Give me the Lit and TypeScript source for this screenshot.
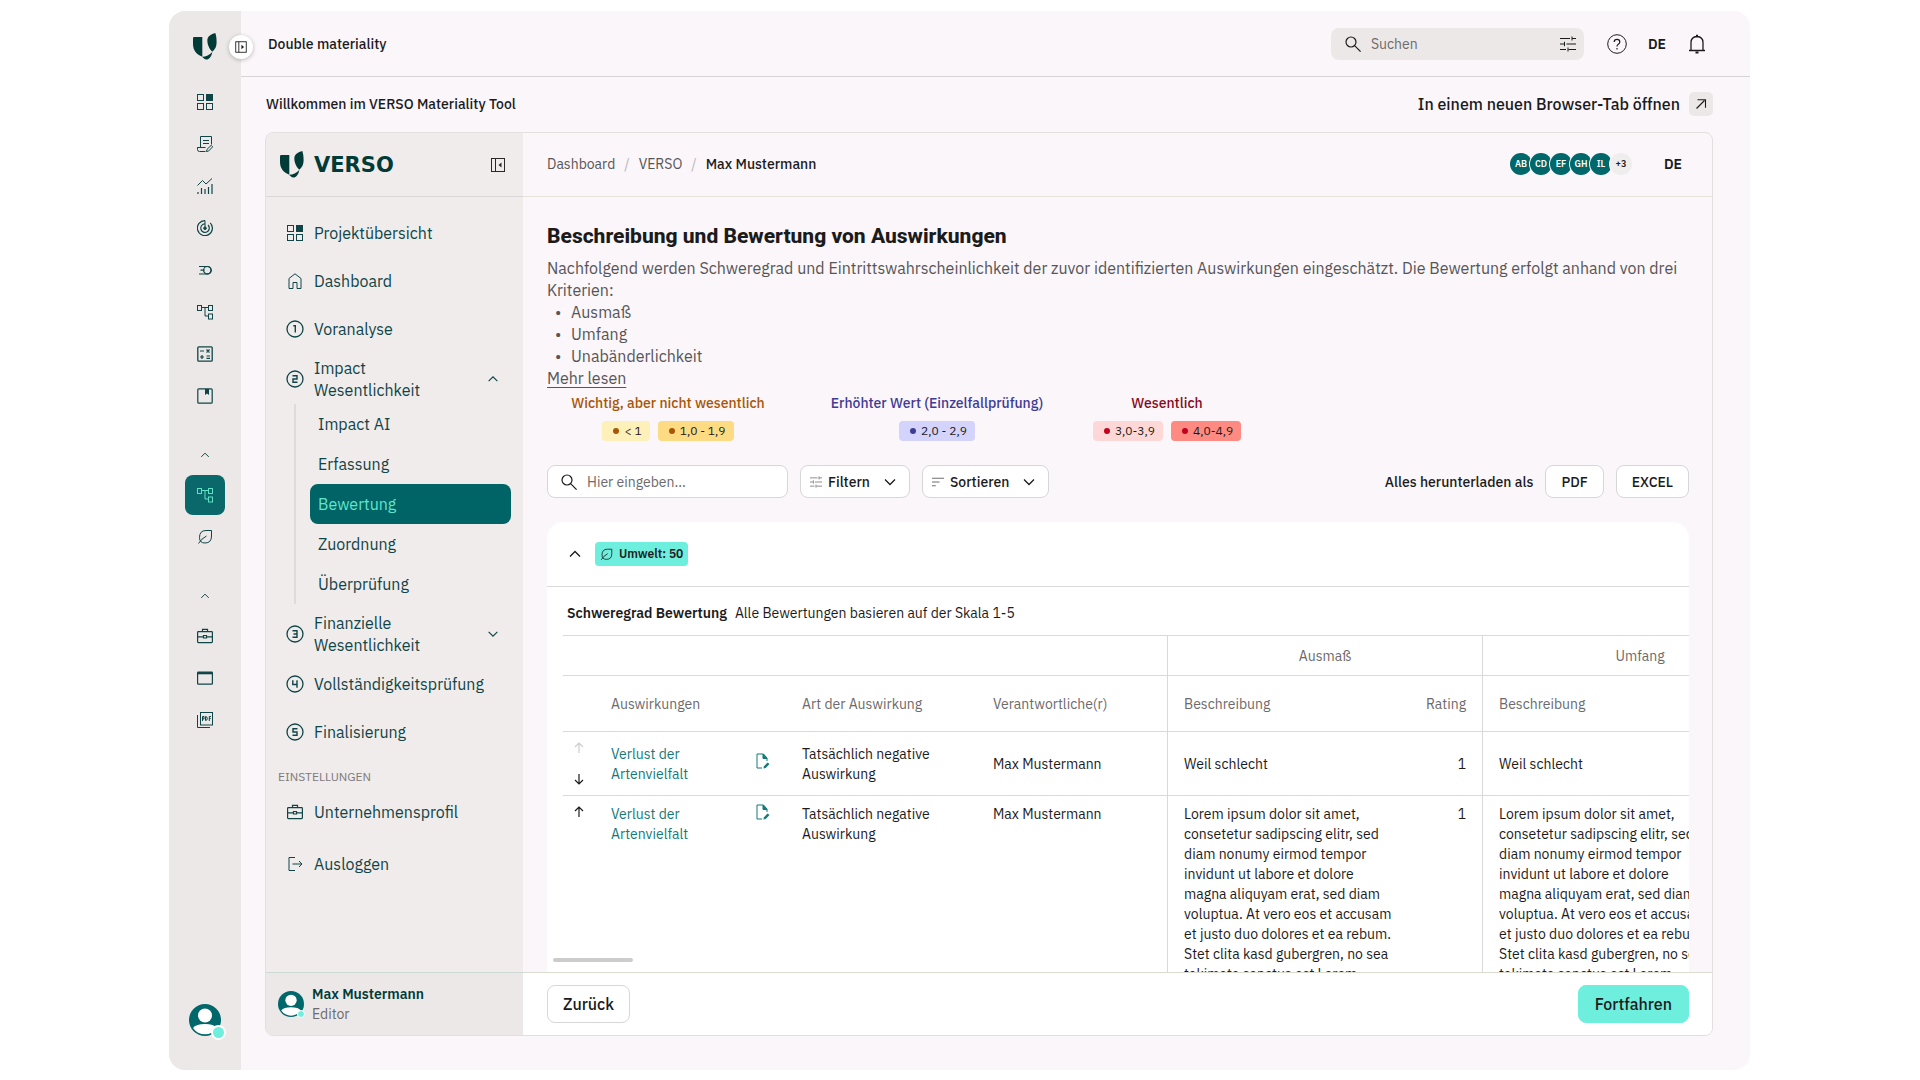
import { LitElement, html, css, svg, nothing, TemplateResult, SVGTemplateResult } from "lit";
import { customElement } from "lit/decorators.js";
import { classMap } from "lit/directives/class-map.js";

const icon = (body: SVGTemplateResult, size = 16, box = 16): TemplateResult => html`
  <svg class="icon" width=${size} height=${size} viewBox="0 0 ${box} ${box}" fill="none" stroke="currentColor" stroke-width="1" aria-hidden="true">${body}</svg>
`;

const glyph = {
  grid: svg`<rect x=".5" y=".5" width="6" height="6"/><rect x="9" y="0" width="7" height="7" fill="currentColor" stroke="none"/><rect x=".5" y="9.5" width="6" height="6"/><rect x="9.5" y="9.5" width="6" height="6"/>`,
  report: svg`<path d="M3.5 11V.5h11v8M6 4.500h6M6 7.500h6M3.500 11.500H.5v2q0 2 2 2h6M.5 11.500h8"/><path d="M9.500 15.500l.4-2L14.200 9.300l1.500 1.500-4.200 4.300z"/>`,
  chart: svg`<path d="M.5 7.500l5-5 3.500 3.500L15 .5"/><path d="M1 14v2M4.500 10v6M8 11v5M11.500 9v7M15 6v10" stroke-width="1.200"/>`,
  target: svg`<path d="M8 .6V7"/><path d="M8 .6A7.500 7.500 0 1 0 13.200 2.800" stroke-width="1.200"/><path d="M8 3.800A4.300 4.300 0 1 0 11 5" stroke-width="1.200"/><circle cx="8" cy="8.200" r="1.300" fill="currentColor"/>`,
  link: svg`<path d="M2 4.500h8.500a3.700 3.700 0 1 1 0 7.500H2M3.500 8.200h4" stroke-width="1.200"/><circle cx="10.300" cy="8.200" r="3.700" stroke-width="1.200"/>`,
  tree: svg`<rect x=".5" y="1.500" width="4" height="5"/><rect x="11.500" y="1.500" width="4" height="5"/><rect x="11.500" y="10" width="4" height="5"/><path d="M4.500 3.500h7M8 3.500v8.500h3.500"/>`,
  calc: svg`<rect x=".8" y=".8" width="14.400" height="14.400" rx="1" stroke-width="1.300"/><path d="M3 5h4M9.500 3.500l3 3M12.500 3.500l-3 3M3 11h4M5 9v4M9.500 10h3.500M9.500 12.300h3.500" stroke-width="1.200"/>`,
  book: svg`<rect x=".8" y=".8" width="14.400" height="14.400" rx="1" stroke-width="1.200"/><path d="M8 1h4v6l-2-1.500L8 7z" fill="currentColor" stroke="none"/>`,
  leaf: svg`<path d="M14.500 1.500v5.500q0 7-6.500 7-5.500 0-5.500-5.500 0-7 6.500-7zM1.500 14.500q3-5 8-7.500"/>`,
  briefcase: svg`<rect x=".6" y="3.600" width="14.800" height="11" rx=".8" stroke-width="1.200"/><path d="M5.500 3.500V1.300h5v2.200M.6 8.800h5.900M9.500 8.800h5.900M6.500 7.500h3v2.500h-3z" stroke-width="1.200"/>`,
  window: svg`<rect x=".6" y="2.200" width="14.800" height="12" rx=".8" stroke-width="1.200"/><path d="M.6 3.200h14.800" stroke-width="2.200"/>`,
  home: svg`<path d="M2 15.500V5.500L8 .8l6 4.700v10h-4v-6H6v6z"/>`,
  logout: svg`<path d="M8 1.500H2v13h6M5.500 8H15M12 5l3 3-3 3"/>`,
  up: svg`<path d="M3 10.500l5-5 5 5" stroke-width="1.300"/>`,
  down: svg`<path d="M3 5.500l5 5 5-5" stroke-width="1.300"/>`,
  search: svg`<circle cx="6" cy="6" r="5" stroke-width="1.200"/><path d="M9.600 9.600l6 6" stroke-width="1.200"/>`,
  tune: svg`<path d="M0 2.500h10M12 2.500h4M12 .5v4M0 8h4M6.500 8H16M4.500 5.800v4.400M0 13.500h6M8.500 13.500H16M8 11.500v4"/>`,
  help: svg`<circle cx="10" cy="10" r="9.300"/><path d="M7.200 8q0-2.700 2.800-2.700T12.800 8q0 1.400-1.500 2.300-1.300.8-1.300 2.200M10 14v1.400" stroke-width="1.200"/>`,
  bell: svg`<path d="M2 16.500h16M4 16.500V8.500q0-5.500 6-6 6 .5 6 6v8" stroke-width="1.300"/><path d="M10 .8v2M8.500 18.500h3" stroke-width="2"/>`,
  openTab: svg`<path d="M3.500 12.500l8-8M4.500 3.800h8v8" stroke-width="1.100"/>`,
  panelOut: svg`<rect x="2" y="2" width="12" height="12"/><path d="M5.500 2v12"/><path d="M8.500 5.500L11.500 8l-3 2.500z" fill="currentColor" stroke="none"/>`,
  panelIn: svg`<rect x="1.500" y="1.500" width="13" height="13"/><path d="M5.500 1.500v13"/><path d="M11.500 5.500L8.500 8l3 2.500z" fill="currentColor" stroke="none"/>`,
  sort: svg`<path d="M0 3h16M0 8h10M0 13h5" stroke-width="1.300"/>`,
  arrowUp: svg`<path d="M8 13V3M4 7l4-4 4 4" stroke-width="1.200"/>`,
  arrowDown: svg`<path d="M8 3v10M4 9l4 4 4-4" stroke-width="1.200"/>`,
  editDoc: svg`<path d="M7 15H2V1h6.500L12 5v3"/><path d="M8 1v4.500h4z" fill="currentColor"/><path d="M8.500 15.500l.3-2L12.500 9.500l2 1.500-3.800 4z" fill="currentColor" stroke="none"/>`,
};

const mark = html`
  <svg class="mark" width="24" height="27" viewBox="0 0 24 27" fill="#003b38" aria-hidden="true">
    <path d="M0 5.200Q0 4 1.200 4H9.300V23.800C3.600 21.500 0 17.500 0 11z" />
    <path d="M22.300 0C18 1.200 14.800 3 14.400 6.500c-.3 4.500 1.600 9.300 4.900 12.200C22.200 16.300 23.600 13.500 23.600 9.500 23.600 5.500 23.200 2.500 22.300 0z" />
    <path d="M9.200 23.800C13 23.600 16.500 22 19.300 18.900 18.600 23 16.500 26.500 13.200 26.500 11.600 26.300 10.300 25.300 9.200 23.800z" />
  </svg>
`;

const person = (size: number) => html`
  <svg class="icon" width=${size} height=${size} viewBox="0 0 32 32" aria-hidden="true">
    <circle cx="16" cy="16" r="16" fill="#00676a" />
    <circle cx="16" cy="11.500" r="7" fill="#fff" />
    <path d="M4 24q3-4 12-4t12 4a14.500 14.500 0 0 1-24 0z" fill="#fff" />
  </svg>
`;

const pdfIcon = html`
  <svg class="icon" width="16" height="16" viewBox="0 0 16 16" fill="none" stroke="currentColor" aria-hidden="true">
    <rect x="3.500" y=".5" width="12" height="12.500" />
    <path d="M.5 3v12.500h12.500M5.500 9V4.500h1.500v2.500H5.500M8.500 4.500v4q1.800 0 1.800-2t-1.800-2M12.300 9V4.500h1.700M12.300 6.500h1.400" />
  </svg>
`;

const DIGIT: Record<string, SVGTemplateResult> = {
  "1": svg`<path d="M7.300 5.800h2v6.700"/>`,
  "2": svg`<path d="M6.500 5.800h4.500V9h-4v3.300h4.500"/>`,
  "3": svg`<path d="M6.500 5.800h4.500v6.500H6.500M7.500 9H11"/>`,
  "4": svg`<path d="M6.800 5.300v4.200H11M11 5.300v7.400"/>`,
  "5": svg`<path d="M11.500 5.800H7V9h4v3.300H6.500"/>`,
};
const numbered = (n: string) => icon(svg`<circle cx="9" cy="9" r="8" stroke-width="1.300"/><g stroke-width="1.400">${DIGIT[n]}</g>`, 18, 18);

const LOREM = `Lorem ipsum dolor sit amet,
consetetur sadipscing elitr, sed
diam nonumy eirmod tempor
invidunt ut labore et dolore
magna aliquyam erat, sed diam
voluptua. At vero eos et accusam
et justo duo dolores et ea rebum.
Stet clita kasd gubergren, no sea
takimata sanctus est Lorem`;

const ROWS = [
  { first: true, text: "Weil schlecht" },
  { first: false, text: LOREM },
];

@customElement("app-root")
export class AppRoot extends LitElement {
  static styles = css`
    :host {
      display: block;
      box-sizing: border-box;
      height: 100vh;
      padding: 11px 170px 10px 169px;
      background: #fff;
      color: #1c1b1c;
      font: 14px/20px "IBM Plex Sans", "Noto Sans", sans-serif;
    }
    * { box-sizing: border-box; }
    button, input { font: inherit; color: inherit; }
    button { padding: 0; border: 0; background: none; }
    a { color: inherit; text-decoration: none; }
    h1, p, ul { margin: 0; padding: 0; }
    .icon, .mark { display: block; flex: none; }
    .shell { display: flex; height: 100%; border-radius: 16px; overflow: hidden; background: #faf6fa; }

    .rail { flex: none; display: flex; flex-direction: column; align-items: center; width: 72px; padding: 22px 0 34px; background: #ece8e7; color: #0f4547; }
    .rail-list { display: flex; flex-direction: column; align-items: center; margin-top: 21px; }
    .rail-item { display: grid; place-items: center; width: 40px; height: 40px; margin: 1px 0; border-radius: 8px; }
    .rail-item.active { background: #0a686b; color: #5fe0c4; }
    .rail-fold { display: grid; place-items: center; width: 40px; height: 38px; margin-top: 19px; }
    .rail-user { position: relative; margin-top: auto; }
    .presence { position: absolute; right: -5px; bottom: -4px; width: 15px; height: 15px; border: 2px solid #fff; border-radius: 50%; background: #6eeedd; }
    .presence.small { right: -1px; bottom: -1px; width: 8px; height: 8px; border-width: 1px; }

    .page { flex: 1; min-width: 0; display: flex; flex-direction: column; }
    .topbar { position: relative; flex: none; display: flex; align-items: center; height: 66px; padding: 0 43px 0 27px; border-bottom: 1px solid #d6d3d6; font-weight: 500; }
    .fold { position: absolute; left: -12px; top: 24px; display: grid; place-items: center; width: 24px; height: 24px; border-radius: 50%; background: #fff; box-shadow: 0 1px 4px rgba(0, 0, 0, .25); }
    .grow { flex: 1; }
    .search { display: flex; align-items: center; gap: 10px; width: 253px; height: 32px; padding: 0 8px 0 14px; border-radius: 8px; background: #ece8e7; font-weight: 400; }
    .search input, .field input { flex: 1; min-width: 0; padding: 0; border: 0; outline: 0; background: none; }
    input::placeholder { color: #6c6a6b; opacity: 1; }
    .tools { display: flex; align-items: center; gap: 21px; margin-left: 23px; font-weight: 600; }
    .welcome { flex: none; display: flex; align-items: center; height: 55px; padding: 0 37px 2px 25px; font-weight: 500; }
    .open { display: flex; align-items: center; gap: 9px; font-size: 16px; }
    .open-box { display: grid; place-items: center; width: 24px; height: 24px; border-radius: 5px; background: #ece8e7; }

    .frame { flex: 1; min-height: 0; display: flex; margin: 0 37px 34px 24px; border: 1px solid #e2dfde; border-radius: 8px; overflow: hidden; }
    .side { flex: none; display: flex; flex-direction: column; width: 257px; background: #f0eceb; color: #0f4547; font-size: 16px; line-height: 22px; }
    .brand { flex: none; display: flex; align-items: center; gap: 10px; height: 64px; padding: 0 17px 0 14px; border-bottom: 1px solid #dad7d6; }
    .word { flex: 1; color: #003b38; font: bold 21px/24px "DejaVu Sans", sans-serif; }
    .brand button { color: #2a2829; }
    .nav { flex: 1; display: flex; flex-direction: column; padding: 12px 12px 0; }
    .nav-item { display: flex; align-items: center; gap: 10px; min-height: 48px; padding: 0 11px 0 8px; text-align: left; }
    .nav-item > .icon { width: 18px; }
    .nav-item.tall { min-height: 52px; }
    .nav-item.tall span { width: 130px; }
    .nav-item > .icon:last-child { margin-left: auto; width: 14px; }
    .sub { display: flex; flex-direction: column; margin: -1px 0 4px 16px; border-left: 2px solid #dedbda; padding-left: 14px; }
    .sub a { display: flex; align-items: center; height: 40px; padding: 0 8px; border-radius: 8px; }
    .sub a.active { background: #006466; color: #5fe6cc; }
    .caption { margin: 11px 0 1px; color: #7d7a7b; font-size: 12px; line-height: 20px; }
    .settings { display: flex; flex-direction: column; gap: 4px; }
    .profile { flex: none; display: flex; align-items: center; gap: 8px; height: 63px; padding: 0 12px; border-top: 1px solid #cfdad6; background: #ece8e7; font-size: 14px; line-height: 20px; }
    .profile strong { display: block; font-weight: 600; color: #003b38; }
    .profile small { display: block; font-size: 14px; color: #6c6a6b; }
    .avatar { position: relative; }

    .main { flex: 1; min-width: 0; display: flex; flex-direction: column; }
    .crumbs { flex: none; display: flex; align-items: center; height: 64px; padding: 0 30px 2px 24px; border-bottom: 1px solid #e6e4d8; color: #575556; }
    .crumbs nav { display: flex; gap: 9px; }
    .crumbs i { color: #b9b6b8; font-style: normal; }
    .crumbs b { color: #1c1b1c; font-weight: 500; }
    .crumbs strong { margin-left: 32px; color: #1c1b1c; font-weight: 600; }
    .people { display: flex; }
    .people span { display: grid; place-items: center; width: 22px; height: 22px; margin-left: -2px; border-radius: 50%; background: #00676a; color: #fff; box-shadow: 0 0 0 1px #faf6fa; font-size: 9px; font-weight: 600; }
    .people .more { background: #f0eeec; color: #1c1b1c; }
    .content { flex: 1; min-height: 0; overflow: hidden; padding: 25px 23px 0 24px; display: flex; flex-direction: column; }
    h1 { font: 800 21px/28px Roboto, sans-serif; }
    .intro { flex: none; margin-top: 7px; color: #575556; font-size: 16px; line-height: 22px; }
    .intro ul { padding-left: 8px; list-style: none; }
    .intro li { display: flex; }
    .intro li::before { content: "•"; width: 16px; }
    .intro a { text-decoration: underline; text-underline-offset: 3px; }
    .legend { flex: none; display: grid; grid-template-columns: 242px 296px 164px; margin-top: 4px; font-weight: 500; text-align: center; }
    .legend .warn { color: #a85506; }
    .legend .raised { color: #3f3c93; }
    .legend .crit { color: #87091c; }
    .chips { display: flex; justify-content: center; gap: 8px; margin-top: 8px; }
    .chip { display: flex; align-items: center; gap: 5px; height: 20px; padding: 0 8px 0 11px; border-radius: 4px; color: #1c1b1c; font-size: 12px; font-weight: 400; }
    .dot { width: 6px; height: 6px; border-radius: 50%; }
    .amber .dot { background: #a85506; }
    .violet .dot { background: #3f3c93; }
    .red .dot { background: #c4001d; }
    .c1 { background: #fdf0b8; }
    .c2 { background: #fddb83; }
    .c3 { background: #d3d3fb; }
    .c4 { background: #fed8d6; }
    .c5 { background: #fe8a82; }
    .toolbar { flex: none; display: flex; align-items: center; gap: 12px; margin-top: 24px; font-weight: 500; }
    .field, .btn { display: flex; align-items: center; height: 33px; border: 1px solid #d9d6d8; border-radius: 8px; background: #fff; }
    .field { gap: 10px; width: 241px; padding: 0 13px; font-weight: 400; }
    .btn { gap: 6px; padding: 0 15px; }
    .btn.menu { padding: 0 11px 0 9px; }
    .btn.menu .icon:first-child { color: #6c6a6b; }
    .btn.menu .icon:last-child { margin-left: 6px; }
    .card { position: relative; flex: 1; min-height: 0; margin-top: 24px; border-radius: 16px 16px 0 0; background: #fff; overflow: hidden; }
    .card-head { display: flex; align-items: center; gap: 12px; height: 65px; padding: 0 20px; border-bottom: 1px solid #d9d9d9; }
    .tag { display: flex; align-items: center; gap: 6px; height: 24px; padding: 0 5px; border-radius: 4px; background: #6eeedd; font-size: 12px; font-weight: 600; }
    .scale { display: flex; align-items: center; gap: 8px; height: 48px; padding: 4px 20px 0; }
    .scale strong { font-weight: 600; }
    table { table-layout: fixed; width: 1234px; margin-left: 16px; border-collapse: separate; border-spacing: 0; border-top: 1px solid #d9d9d9; }
    th, td { padding: 0 16px; border-bottom: 1px solid #d9d9d9; text-align: left; font-weight: 400; }
    th { height: 56px; color: #6c6a6b; }
    .groups th { height: 40px; text-align: center; }
    td { height: 64px; padding: 8px 16px; vertical-align: middle; }
    td.text { white-space: pre-line; }
    .top td { vertical-align: top; }
    .edge { border-left: 1px solid #d9d9d9; }
    .num { text-align: right; }
    .c-move { width: 32px; }
    .c-impact { width: 152px; }
    .c-edit { width: 39px; }
    .c-kind { width: 191px; }
    .c-owner { width: 190px; }
    .c-desc { width: 241px; }
    .c-rate { width: 74px; }
    td.move, td.edit { padding: 8px; }
    .move button { display: block; }
    .move button + button { margin-top: 15px; }
    .move button[disabled] { color: #cfcdce; }
    .impact a, .edit { color: #137a7a; }
    .thumb { position: absolute; left: 6px; bottom: 10px; width: 80px; height: 4px; border-radius: 2px; background: #ccc; }
    .actions { flex: none; display: flex; align-items: center; justify-content: space-between; height: 63px; padding: 0 23px 0 24px; border-top: 1px solid #d9dccf; background: #fff; font-size: 16px; font-weight: 500; }
    .actions .btn { height: 38px; }
    .actions .btn.primary { padding: 0 16px; border-color: #6eeedd; background: #6eeedd; }
  `;

  private railItem(label: string, body: TemplateResult, active = false) {
    return html`<a class=${classMap({ "rail-item": true, active })} href="#" aria-label=${label}>${body}</a>`;
  }

  private navItem(label: string, body: TemplateResult) {
    return html`<a class="nav-item" href="#">${body}<span>${label}</span></a>`;
  }

  private rail() {
    return html`
      <aside class="rail">
        ${mark}
        <nav class="rail-list" aria-label="Module">
          ${this.railItem("Übersicht", icon(glyph.grid))}
          ${this.railItem("Bericht", icon(glyph.report))}
          ${this.railItem("Analyse", icon(glyph.chart))}
          ${this.railItem("Ziele", icon(glyph.target))}
          ${this.railItem("Maßnahmen", icon(glyph.link))}
          ${this.railItem("Lieferkette", icon(glyph.tree))}
          ${this.railItem("Rechner", icon(glyph.calc))}
          ${this.railItem("Bibliothek", icon(glyph.book))}
          <button class="rail-fold" aria-label="Gruppe einklappen">${icon(glyph.up, 12)}</button>
          ${this.railItem("Wesentlichkeit", icon(glyph.tree), true)}
          ${this.railItem("Umwelt", icon(glyph.leaf))}
          <button class="rail-fold" aria-label="Gruppe einklappen">${icon(glyph.up, 12)}</button>
          ${this.railItem("Unternehmen", icon(glyph.briefcase))}
          ${this.railItem("Portal", icon(glyph.window))}
          ${this.railItem("Export", pdfIcon)}
        </nav>
        <button class="rail-user" aria-label="Konto">${person(32)}<span class="presence"></span></button>
      </aside>
    `;
  }

  private side() {
    const sub = ["Impact AI", "Erfassung", "Bewertung", "Zuordnung", "Überprüfung"];
    return html`
      <aside class="side">
        <div class="brand">
          ${mark}<span class="word">VERSO</span>
          <button aria-label="Navigation einklappen">${icon(glyph.panelIn)}</button>
        </div>
        <nav class="nav" aria-label="Projekt">
          ${this.navItem("Projektübersicht", icon(glyph.grid))}
          ${this.navItem("Dashboard", icon(glyph.home))}
          ${this.navItem("Voranalyse", numbered("1"))}
          <button class="nav-item tall" aria-expanded="true">
            ${numbered("2")}<span>Impact Wesentlichkeit</span>${icon(glyph.up)}
          </button>
          <div class="sub">
            ${sub.map((s) => html`<a href="#" class=${classMap({ active: s === "Bewertung" })}>${s}</a>`)}
          </div>
          <button class="nav-item tall" aria-expanded="false">
            ${numbered("3")}<span>Finanzielle Wesentlichkeit</span>${icon(glyph.down)}
          </button>
          ${this.navItem("Vollständigkeitsprüfung", numbered("4"))}
          ${this.navItem("Finalisierung", numbered("5"))}
          <p class="caption">EINSTELLUNGEN</p>
          <div class="settings">
            ${this.navItem("Unternehmensprofil", icon(glyph.briefcase))}
            ${this.navItem("Ausloggen", icon(glyph.logout))}
          </div>
        </nav>
        <div class="profile">
          <span class="avatar">${person(26)}<span class="presence small"></span></span>
          <div><strong>Max Mustermann</strong><small>Editor</small></div>
        </div>
      </aside>
    `;
  }

  private chip(tone: string, shade: string, text: string) {
    return html`<span class="chip ${tone} ${shade}"><span class="dot"></span>${text}</span>`;
  }

  private table() {
    return html`
      <table>
        <colgroup>
          <col class="c-move" /><col class="c-impact" /><col class="c-edit" /><col class="c-kind" /><col class="c-owner" />
          <col class="c-desc" /><col class="c-rate" /><col class="c-desc" /><col class="c-rate" />
        </colgroup>
        <thead>
          <tr class="groups">
            <th colspan="5"></th><th class="edge" colspan="2">Ausmaß</th><th class="edge" colspan="2">Umfang</th>
          </tr>
          <tr>
            <th></th><th>Auswirkungen</th><th></th><th>Art der Auswirkung</th><th>Verantwortliche(r)</th>
            <th class="edge">Beschreibung</th><th class="num">Rating</th>
            <th class="edge">Beschreibung</th><th></th>
          </tr>
        </thead>
        <tbody>
          ${ROWS.map((r) => html`
            <tr class=${r.first ? "" : "top"}>
              <td class="move">
                <button ?disabled=${r.first} aria-label="Nach oben">${icon(glyph.arrowUp)}</button>
                ${r.first ? html`<button aria-label="Nach unten">${icon(glyph.arrowDown)}</button>` : nothing}
              </td>
              <td class="impact"><a href="#">Verlust der Artenvielfalt</a></td>
              <td class="edit"><button aria-label="Bearbeiten">${icon(glyph.editDoc)}</button></td>
              <td>Tatsächlich negative Auswirkung</td>
              <td>Max Mustermann</td>
              <td class="edge text">${r.text}</td><td class="num">1</td>
              <td class="edge text">${r.text}</td><td></td>
            </tr>`)}
        </tbody>
      </table>
    `;
  }

  private main() {
    return html`
      <main class="main">
        <div class="crumbs">
          <nav aria-label="Pfad"><a href="#">Dashboard</a><i>/</i><a href="#">VERSO</a><i>/</i><b>Max Mustermann</b></nav>
          <span class="grow"></span>
          <div class="people">
            ${["AB", "CD", "EF", "GH", "IL"].map((p) => html`<span>${p}</span>`)}<span class="more">+3</span>
          </div>
          <strong>DE</strong>
        </div>
        <div class="content">
          <h1>Beschreibung und Bewertung von Auswirkungen</h1>
          <div class="intro">
            <p>Nachfolgend werden Schweregrad und Eintrittswahrscheinlichkeit der zuvor identifizierten Auswirkungen eingeschätzt. Die Bewertung erfolgt anhand von drei Kriterien:</p>
            <ul><li>Ausmaß</li><li>Umfang</li><li>Unabänderlichkeit</li></ul>
            <a href="#">Mehr lesen</a>
          </div>
          <div class="legend">
            <div><span class="warn">Wichtig, aber nicht wesentlich</span>
              <div class="chips">${this.chip("amber", "c1", "< 1")}${this.chip("amber", "c2", "1,0 - 1,9")}</div></div>
            <div><span class="raised">Erhöhter Wert (Einzelfallprüfung)</span>
              <div class="chips">${this.chip("violet", "c3", "2,0 - 2,9")}</div></div>
            <div><span class="crit">Wesentlich</span>
              <div class="chips">${this.chip("red", "c4", "3,0-3,9")}${this.chip("red", "c5", "4,0-4,9")}</div></div>
          </div>
          <div class="toolbar">
            <label class="field">${icon(glyph.search)}<input type="search" placeholder="Hier eingeben..." aria-label="Auswirkungen suchen" /></label>
            <button class="btn menu">${icon(glyph.tune, 12)}Filtern${icon(glyph.down)}</button>
            <button class="btn menu">${icon(glyph.sort, 12)}Sortieren${icon(glyph.down)}</button>
            <span class="grow"></span>
            <span>Alles herunterladen als</span>
            <button class="btn">PDF</button>
            <button class="btn">EXCEL</button>
          </div>
          <section class="card">
            <div class="card-head">
              <button aria-label="Umwelt einklappen">${icon(glyph.up)}</button>
              <span class="tag">${icon(glyph.leaf, 13)}Umwelt: 50</span>
            </div>
            <div class="scale"><strong>Schweregrad Bewertung</strong><span>Alle Bewertungen basieren auf der Skala 1-5</span></div>
            ${this.table()}
            <span class="thumb"></span>
          </section>
        </div>
        <div class="actions"><button class="btn">Zurück</button><button class="btn primary">Fortfahren</button></div>
      </main>
    `;
  }

  render() {
    return html`
      <div class="shell">
        ${this.rail()}
        <div class="page">
          <header class="topbar">
            <button class="fold" aria-label="Leiste ausklappen">${icon(glyph.panelOut, 14)}</button>
            <span>Double materiality</span>
            <span class="grow"></span>
            <label class="search">${icon(glyph.search)}<input type="search" placeholder="Suchen" aria-label="Suchen" />${icon(glyph.tune)}</label>
            <div class="tools">
              <button aria-label="Hilfe">${icon(glyph.help, 20, 20)}</button>
              <button>DE</button>
              <button aria-label="Benachrichtigungen">${icon(glyph.bell, 20, 20)}</button>
            </div>
          </header>
          <div class="welcome">
            <span>Willkommen im VERSO Materiality Tool</span>
            <span class="grow"></span>
            <a class="open" href="#">In einem neuen Browser-Tab öffnen<span class="open-box">${icon(glyph.openTab)}</span></a>
          </div>
          <div class="frame">${this.side()}${this.main()}</div>
        </div>
      </div>
    `;
  }
}
